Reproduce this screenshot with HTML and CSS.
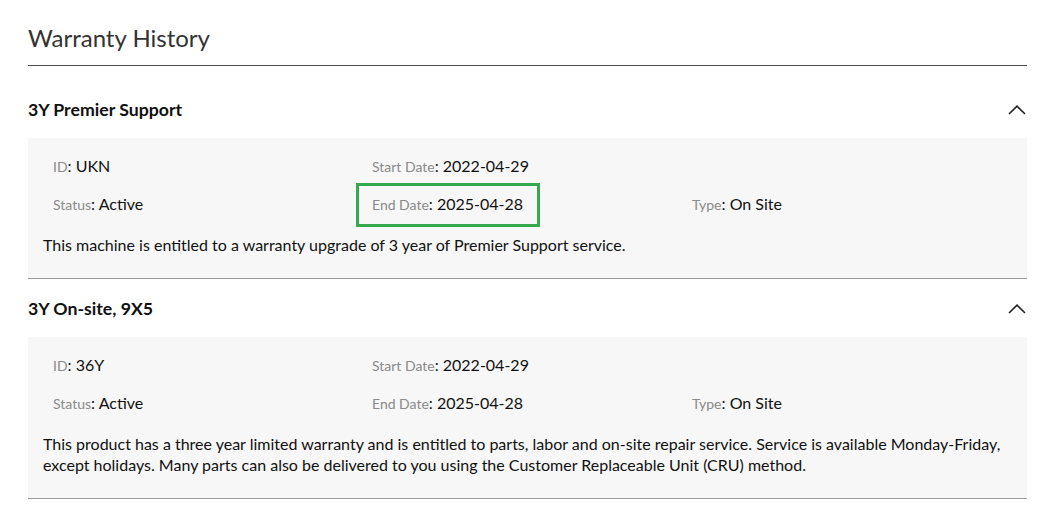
FILE: index.html
```html
<!DOCTYPE html>
<html lang="en">
<head>
<meta charset="utf-8">
<title>Warranty History</title>
<link rel="stylesheet" href="styles.css">
</head>
<body>
<div class="page">
  <h1 class="title">Warranty History</h1>

  <section class="warranty">
    <div class="warranty-head">
      <h2 class="warranty-name">3Y Premier Support</h2>
      <svg class="chevron" width="18" height="10" viewBox="0 0 18 10"><polyline points="1,9 9,1.2 17,9" fill="none" stroke="#222" stroke-width="1.6"/></svg>
    </div>
    <div class="warranty-body">
      <div class="fields">
        <div class="field"><span class="label">ID</span>: <span class="value">UKN</span></div>
        <div class="field"><span class="label">Start Date</span>: <span class="value">2022-04-29</span></div>
        <div class="field"></div>
        <div class="field"><span class="label">Status</span>: <span class="value">Active</span></div>
        <div class="field highlight"><span class="label">End Date</span>: <span class="value">2025-04-28</span></div>
        <div class="field"><span class="label">Type</span>: <span class="value">On Site</span></div>
      </div>
      <p class="desc">This machine is entitled to a warranty upgrade of 3 year of Premier Support service.</p>
    </div>
  </section>

  <section class="warranty">
    <div class="warranty-head">
      <h2 class="warranty-name">3Y On-site, 9X5</h2>
      <svg class="chevron" width="18" height="10" viewBox="0 0 18 10"><polyline points="1,9 9,1.2 17,9" fill="none" stroke="#222" stroke-width="1.6"/></svg>
    </div>
    <div class="warranty-body">
      <div class="fields">
        <div class="field"><span class="label">ID</span>: <span class="value">36Y</span></div>
        <div class="field"><span class="label">Start Date</span>: <span class="value">2022-04-29</span></div>
        <div class="field"></div>
        <div class="field"><span class="label">Status</span>: <span class="value">Active</span></div>
        <div class="field"><span class="label">End Date</span>: <span class="value">2025-04-28</span></div>
        <div class="field"><span class="label">Type</span>: <span class="value">On Site</span></div>
      </div>
      <p class="desc">This product has a three year limited warranty and is entitled to parts, labor and on-site repair service. Service is available Monday-Friday, except holidays. Many parts can also be delivered to you using the Customer Replaceable Unit (CRU) method.</p>
    </div>
  </section>
</div>
</body>
</html>
```

FILE: styles.css
```css
* { box-sizing: border-box; }

html, body {
  margin: 0;
  padding: 0;
  background: #ffffff;
}

body {
  font-family: Lato, "Open Sans", Arial, sans-serif;
  color: #111;
}

.page {
  width: 999px;
  margin-left: 28px;
}

.title {
  margin: 0 0 14px 0;
  padding: 23px 0 13px 0;
  font-size: 24px;
  line-height: 29px;
  font-weight: 400;
  color: #333;
  border-bottom: 1px solid #4a4a4a;
}

.warranty {
  border-bottom: 1px solid #9a9a9a;
}

.warranty-head {
  display: flex;
  align-items: center;
  justify-content: space-between;
  padding: 16px 0 14px 0;
}

.warranty-name {
  margin: 0;
  font-size: 17.7px;
  line-height: 28px;
  font-weight: 700;
  color: #111;
}

.chevron {
  display: block;
  margin-right: 1px;
}

.warranty-body {
  background: #f7f7f7;
  padding: 16px 17px 23px 15px;
}

.fields {
  display: grid;
  grid-template-columns: 319px 320px 1fr;
  row-gap: 13px;
  padding-left: 10px;
}

.field {
  position: relative;
  line-height: 24px;
  font-size: 16px;
  color: #111;
  min-height: 24px;
}

.label {
  font-size: 14px;
  color: #8a8a8a;
}

.value {
  font-size: 16px;
  color: #111;
}

.highlight {
  justify-self: start;
}

.highlight::after {
  content: "";
  position: absolute;
  top: -9px;
  bottom: -10px;
  left: -16px;
  right: -17px;
  border: 3px solid #36a84d;
}

.desc {
  margin: 17px 0 0 0;
  font-size: 16px;
  line-height: 21px;
  color: #111;
}
```
